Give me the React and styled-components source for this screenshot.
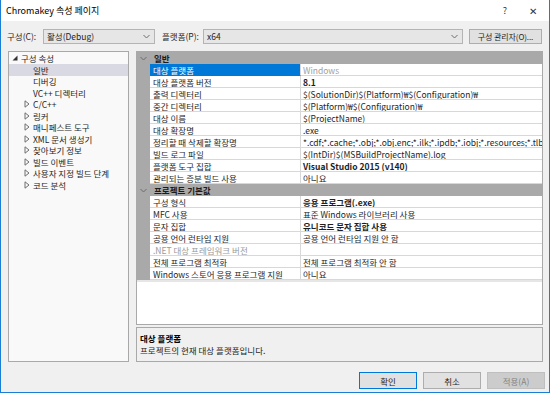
import styled, { createGlobalStyle } from "styled-components"

const GlobalStyle = createGlobalStyle`
    body {
        margin: 0;
        background: #ffffff;
        font-family: "Noto Sans CJK KR", "Noto Sans", sans-serif;
    }
`

const tree = [
    { label: "구성 속성", level: 0, mark: "open" },
    { label: "일반", level: 1, selected: true },
    { label: "디버깅", level: 1 },
    { label: "VC++ 디렉터리", level: 1 },
    { label: "C/C++", level: 1, mark: "closed" },
    { label: "링커", level: 1, mark: "closed" },
    { label: "매니페스트 도구", level: 1, mark: "closed" },
    { label: "XML 문서 생성기", level: 1, mark: "closed" },
    { label: "찾아보기 정보", level: 1, mark: "closed" },
    { label: "빌드 이벤트", level: 1, mark: "closed" },
    { label: "사용자 지정 빌드 단계", level: 1, mark: "closed" },
    { label: "코드 분석", level: 1, mark: "closed" },
]

const groups = [
    {
        title: "일반",
        rows: [
            { name: "대상 플랫폼", value: "Windows", selected: true, dim: true },
            { name: "대상 플랫폼 버전", value: "8.1", bold: true },
            { name: "출력 디렉터리", value: "$(SolutionDir)$(Platform)₩$(Configuration)₩" },
            { name: "중간 디렉터리", value: "$(Platform)₩$(Configuration)₩" },
            { name: "대상 이름", value: "$(ProjectName)" },
            { name: "대상 확장명", value: ".exe" },
            { name: "정리할 때 삭제할 확장명", value: "*.cdf;*.cache;*.obj;*.obj.enc;*.ilk;*.ipdb;*.iobj;*.resources;*.tlb;*.tli;*.tlh;*.tmp;*.rsp;*.pgc;*.pgd;*.meta" },
            { name: "빌드 로그 파일", value: "$(IntDir)$(MSBuildProjectName).log" },
            { name: "플랫폼 도구 집합", value: "Visual Studio 2015 (v140)", bold: true },
            { name: "관리되는 증분 빌드 사용", value: "아니요" },
        ],
    },
    {
        title: "프로젝트 기본값",
        rows: [
            { name: "구성 형식", value: "응용 프로그램(.exe)", bold: true },
            { name: "MFC 사용", value: "표준 Windows 라이브러리 사용" },
            { name: "문자 집합", value: "유니코드 문자 집합 사용", bold: true },
            { name: "공용 언어 런타임 지원", value: "공용 언어 런타임 지원 안 함" },
            { name: ".NET 대상 프레임워크 버전", value: "", disabled: true },
            { name: "전체 프로그램 최적화", value: "전체 프로그램 최적화 안 함" },
            { name: "Windows 스토어 응용 프로그램 지원", value: "아니요" },
        ],
    },
]

function Chevron() {
    return (
        <svg width="7" height="5" viewBox="0 0 7 5">
            <polyline points="0.5,1 3.5,4 6.5,1" fill="none" stroke="#6d6d6d" strokeWidth="1" />
        </svg>
    )
}

function TreeMark({ mark }) {
    if (mark === "open") {
        return (
            <svg width="6" height="6" viewBox="0 0 6 6">
                <polygon points="5.5,0.5 5.5,5.5 0.5,5.5" fill="#333" />
            </svg>
        )
    }
    if (mark === "closed") {
        return (
            <svg width="6" height="8" viewBox="0 0 6 8">
                <polygon points="1,0.8 5,4 1,7.2" fill="none" stroke="#6e6e6e" strokeWidth="1" />
            </svg>
        )
    }
    return null
}

export default function App() {
    return (
        <Window>
            <GlobalStyle />
            <TitleBar>
                <span>Chromakey 속성 페이지</span>
                <TitleButtons>
                    <span>?</span>
                    <Close>✕</Close>
                </TitleButtons>
            </TitleBar>

            <Toolbar>
                <Label $width={36}>구성(C):</Label>
                <Combo $width={112}>
                    <span>활성(Debug)</span>
                    <Chevron />
                </Combo>
                <Label $width={41} $left={7}>플랫폼(P):</Label>
                <Combo $width={260}>
                    <span>x64</span>
                    <Chevron />
                </Combo>
                <ToolButton>구성 관리자(O)...</ToolButton>
            </Toolbar>

            <Main>
                <Tree>
                    {tree.map(item => (
                        <TreeItem key={item.label} $selected={item.selected}>
                            <MarkSlot $level={item.level}>
                                <TreeMark mark={item.mark} />
                            </MarkSlot>
                            {item.label}
                        </TreeItem>
                    ))}
                </Tree>

                <RightSide>
                    <Grid>
                        {groups.map(group => (
                            <div key={group.title}>
                                <GroupHeader>
                                    <GroupChevron>
                                        <Chevron />
                                    </GroupChevron>
                                    {group.title}
                                </GroupHeader>
                                {group.rows.map(row => (
                                    <Row key={row.name}>
                                        <Gutter />
                                        <NameCell $selected={row.selected} $disabled={row.disabled}>
                                            {row.name}
                                        </NameCell>
                                        <ValueCell $bold={row.bold} $dim={row.dim}>
                                            {row.value}
                                        </ValueCell>
                                    </Row>
                                ))}
                            </div>
                        ))}
                        <GridEnd />
                    </Grid>
                    <Description>
                        <strong>대상 플랫폼</strong>
                        <span>프로젝트의 현재 대상 플랫폼입니다.</span>
                    </Description>
                </RightSide>
            </Main>

            <Footer>
                <DialogButton $default>확인</DialogButton>
                <DialogButton>취소</DialogButton>
                <DialogButton disabled>적용(A)</DialogButton>
            </Footer>
        </Window>
    )
}

const Window = styled.div`
    width: 550px;
    height: 393px;
    box-sizing: border-box;
    border: 1px solid #1a7fd4;
    border-top: none;
    background: #f0f0f0;
    display: flex;
    flex-direction: column;
    color: #1e1e1e;
    font-size: 8.5px;
    overflow: hidden;
`

const TitleBar = styled.div`
    height: 21px;
    flex-shrink: 0;
    background: #ffffff;
    display: flex;
    align-items: center;
    justify-content: space-between;
    padding: 0 0 0 5px;
    font-size: 9px;
    color: #000;
`

const TitleButtons = styled.div`
    display: flex;
    align-items: center;
    gap: 22px;
    padding-right: 12px;
    font-size: 9px;
    color: #333;
`

const Close = styled.span`
    font-size: 10px;
`

const Toolbar = styled.div`
    display: flex;
    align-items: center;
    height: 16px;
    margin-top: 7px;
    padding-left: 6px;
`

const Label = styled.span`
    width: ${p => p.$width}px;
    margin-left: ${p => p.$left || 0}px;
    white-space: nowrap;
`

const Combo = styled.div`
    width: ${p => p.$width}px;
    height: 15px;
    box-sizing: border-box;
    border: 1px solid #b4b4b4;
    background: #e6e6e6;
    display: flex;
    align-items: center;
    justify-content: space-between;
    padding: 0 4px 0 3px;
`

const ToolButton = styled.div`
    width: 73px;
    height: 15px;
    box-sizing: border-box;
    margin-left: 6px;
    border: 1px solid #adadad;
    background: #e1e1e1;
    display: flex;
    align-items: center;
    justify-content: center;
    white-space: nowrap;
    font-size: 8px;
    letter-spacing: -0.1px;
`

const Main = styled.div`
    display: flex;
    height: 311px;
    margin-top: 7px;
    padding-left: 7px;
    gap: 7px;
`

const Tree = styled.div`
    width: 121px;
    box-sizing: border-box;
    border: 1px solid #a9a9a9;
    background: #f9f9f9;
    padding-top: 0.5px;
`

const TreeItem = styled.div`
    height: 11.5px;
    display: flex;
    align-items: center;
    white-space: nowrap;
    background: ${p => (p.$selected ? "#d9d9e4" : "transparent")};
`

const MarkSlot = styled.span`
    width: 9px;
    margin-left: ${p => (p.$level === 0 ? 3 : 15)}px;
    display: flex;
    align-items: center;
`

const RightSide = styled.div`
    width: 407px;
    display: flex;
    flex-direction: column;
    gap: 2px;
`

const Grid = styled.div`
    height: 274px;
    box-sizing: border-box;
    border: 1px solid #a9a9a9;
    background: #ffffff;
    overflow: hidden;
`

const GroupHeader = styled.div`
    height: 12px;
    box-sizing: border-box;
    background: #a9a9a9;
    display: flex;
    align-items: center;
    font-weight: bold;
    color: #1b1b1b;
`

const GroupChevron = styled.span`
    width: 17px;
    padding-left: 3px;
    box-sizing: border-box;
    display: flex;
    align-items: center;
`

const Row = styled.div`
    height: 12px;
    display: flex;
`

const Gutter = styled.div`
    width: 13px;
    flex-shrink: 0;
    background: #a9a9a9;
`

const NameCell = styled.div`
    width: 151px;
    flex-shrink: 0;
    box-sizing: border-box;
    padding-left: 3px;
    display: flex;
    align-items: center;
    white-space: nowrap;
    overflow: hidden;
    border-right: 1px solid #d8d8d8;
    border-bottom: 1px solid ${p => (p.$selected ? "#0078d7" : "#d8d8d8")};
    background: ${p => (p.$selected ? "#0078d7" : "#ffffff")};
    color: ${p => (p.$selected ? "#ffffff" : p.$disabled ? "#9a9a9a" : "#1e1e1e")};
`

const ValueCell = styled.div`
    flex: 1;
    min-width: 0;
    box-sizing: border-box;
    padding-left: 2px;
    display: flex;
    align-items: center;
    white-space: nowrap;
    overflow: hidden;
    border-bottom: 1px solid #d8d8d8;
    font-weight: ${p => (p.$bold ? "bold" : "normal")};
    color: ${p => (p.$dim ? "#a0a0a0" : "#1e1e1e")};
`

const GridEnd = styled.div`
    height: 2px;
    background: #e6e6e6;
`

const Description = styled.div`
    flex: 1;
    box-sizing: border-box;
    border: 1px solid #a9a9a9;
    padding: 4px 0 0 3px;
    display: flex;
    flex-direction: column;
    line-height: 12px;
    strong {
        font-weight: bold;
        color: #000;
    }
`

const Footer = styled.div`
    display: flex;
    justify-content: flex-end;
    gap: 6px;
    margin-top: 10px;
    padding-right: 4px;
`

const DialogButton = styled.button`
    width: 58px;
    height: 17px;
    box-sizing: border-box;
    padding: 0;
    font-family: inherit;
    font-size: 8.5px;
    border: 1px solid ${p => (p.$default ? "#0078d7" : p.disabled ? "#bfbfbf" : "#adadad")};
    background: ${p => (p.disabled ? "#cccccc" : "#e1e1e1")};
    color: ${p => (p.disabled ? "#838383" : "#1e1e1e")};
`
